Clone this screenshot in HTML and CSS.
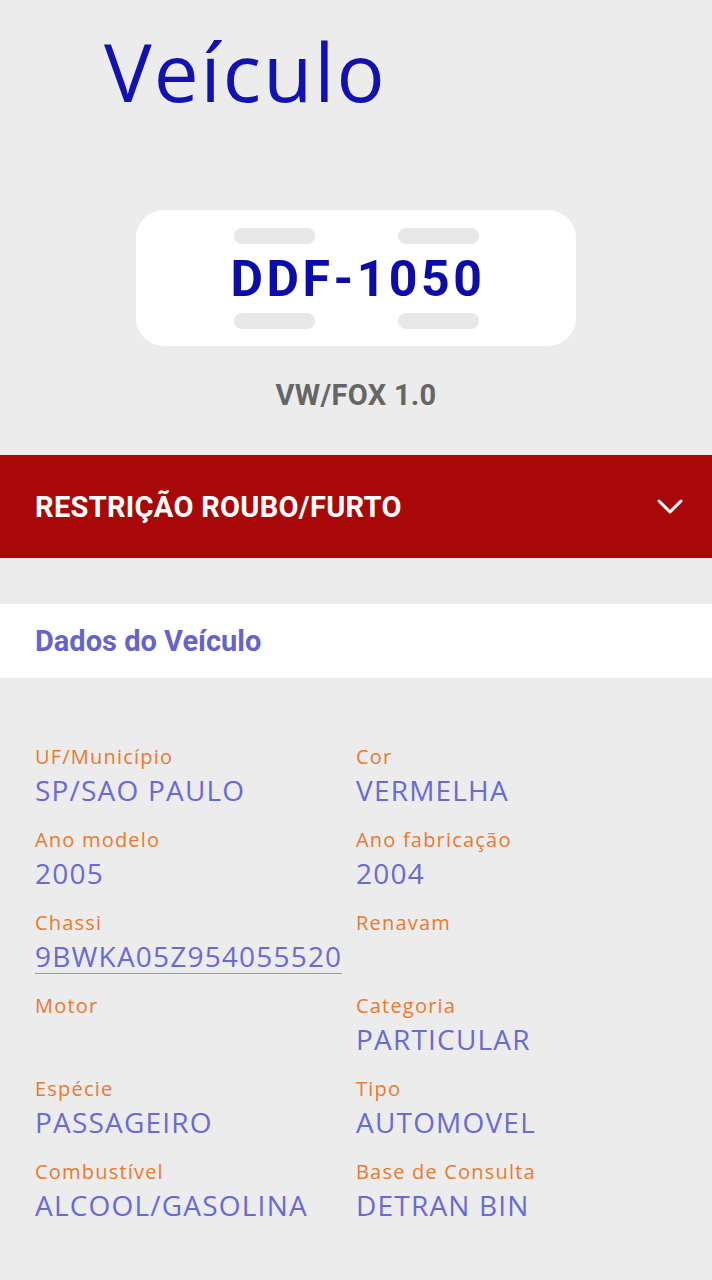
FILE: index.html
```html
<!DOCTYPE html>
<html lang="pt-BR">
<head>
    <meta charset="UTF-8">
    <meta name="viewport" content="width=device-width, initial-scale=1.0">
    <title>Veículo</title>
    <link rel="stylesheet" href="styles.css">
</head>
<body>
    <h1 class="title">Veículo</h1>

    <div class="plate-wrap">
        <div class="plate">
            <div class="pills">
                <span class="pill"></span>
                <span class="pill"></span>
            </div>
            <div class="plate-number">DDF-1050</div>
            <div class="pills">
                <span class="pill"></span>
                <span class="pill"></span>
            </div>
        </div>
        <div class="model">VW/FOX 1.0</div>
    </div>

    <div class="alert">
        <span>RESTRIÇÃO ROUBO/FURTO</span>
        <svg class="chevron" width="26" height="16" viewBox="0 0 26 16">
            <path d="M2 2 L13 13 L24 2" fill="none" stroke="#fff" stroke-width="3" stroke-linecap="round" stroke-linejoin="round"/>
        </svg>
    </div>

    <div class="section-head">Dados do Veículo</div>

    <div class="data-grid">
        <div class="field">
            <div class="label">UF/Município</div>
            <div class="value">SP/SAO PAULO</div>
        </div>
        <div class="field">
            <div class="label">Cor</div>
            <div class="value">VERMELHA</div>
        </div>
        <div class="field">
            <div class="label">Ano modelo</div>
            <div class="value">2005</div>
        </div>
        <div class="field">
            <div class="label">Ano fabricação</div>
            <div class="value">2004</div>
        </div>
        <div class="field">
            <div class="label">Chassi</div>
            <div class="value underline">9BWKA05Z954055520</div>
        </div>
        <div class="field">
            <div class="label">Renavam</div>
            <div class="value"></div>
        </div>
        <div class="field">
            <div class="label">Motor</div>
            <div class="value"></div>
        </div>
        <div class="field">
            <div class="label">Categoria</div>
            <div class="value">PARTICULAR</div>
        </div>
        <div class="field">
            <div class="label">Espécie</div>
            <div class="value">PASSAGEIRO</div>
        </div>
        <div class="field">
            <div class="label">Tipo</div>
            <div class="value">AUTOMOVEL</div>
        </div>
        <div class="field">
            <div class="label">Combustível</div>
            <div class="value">ALCOOL/GASOLINA</div>
        </div>
        <div class="field">
            <div class="label">Base de Consulta</div>
            <div class="value">DETRAN BIN</div>
        </div>
    </div>
</body>
</html>
```

FILE: styles.css
```css
body {
    margin: 0;
    padding: 0;
    background-color: #ececec;
    font-family: "Open Sans", sans-serif;
    height: 1280px;
    overflow: hidden;
}
.title {
    margin: 0;
    padding: 19px 0 0 104px;
    height: 184px;
    box-sizing: border-box;
    font-size: 80px;
    font-weight: 400;
    line-height: 104px;
    letter-spacing: 2px;
    color: #1212b2;
}
.plate-wrap {
    display: flex;
    flex-direction: column;
    align-items: center;
    height: 271px;
}
.plate {
    margin-top: 26px;
    width: 440px;
    height: 136px;
    box-sizing: border-box;
    background-color: #ffffff;
    border-radius: 28px;
    display: flex;
    flex-direction: column;
    justify-content: space-between;
    padding: 18px 0 17px;
}
.pills {
    display: flex;
    justify-content: center;
    gap: 83px;
}
.pill {
    width: 81px;
    height: 16px;
    border-radius: 8px;
    background-color: #e8e8e8;
}
.plate-number {
    text-align: center;
    padding-left: 4px;
    font-family: Roboto, sans-serif;
    font-weight: 700;
    font-size: 50px;
    line-height: 54px;
    letter-spacing: 3.5px;
    color: #0c0ca8;
}
.model {
    margin-top: 32px;
    font-family: Roboto, sans-serif;
    font-weight: 700;
    font-size: 29px;
    letter-spacing: 0.3px;
    color: #666666;
}
.alert {
    height: 103px;
    background-color: #a80808;
    color: #ffffff;
    font-family: Roboto, sans-serif;
    font-weight: 700;
    font-size: 29px;
    letter-spacing: 0.3px;
    display: flex;
    align-items: center;
    justify-content: space-between;
    padding: 0 29px 0 35px;
}
.section-head {
    margin-top: 46px;
    height: 74px;
    background-color: #ffffff;
    display: flex;
    align-items: center;
    padding-left: 35px;
    font-family: Roboto, sans-serif;
    font-weight: 700;
    font-size: 29px;
    color: #6464cc;
}
.data-grid {
    display: grid;
    grid-template-columns: 321px 1fr;
    padding: 66px 0 0 35px;
    row-gap: 7px;
}
.field {
    height: 76px;
}
.label {
    font-size: 20px;
    line-height: 26px;
    letter-spacing: 1.2px;
    color: #ea7a2c;
}
.value {
    margin-top: 3px;
    font-size: 28px;
    line-height: 34px;
    letter-spacing: 1.2px;
    color: #6a6ad6;
    display: inline-block;
}
.underline {
    border-bottom: 1px solid #9a9a9a;
}
```
